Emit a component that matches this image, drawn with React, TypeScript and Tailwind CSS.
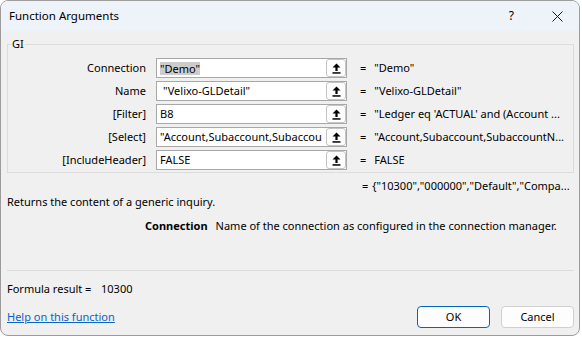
import React from "react";

const font = { fontFamily: '"Noto Sans", "Open Sans", Arial, sans-serif' };

function UpArrow() {
  return (
    <svg width="9" height="11" viewBox="0 0 9 11" fill="#000">
      <path d="M4.5 0.5 L8.5 4.5 H5.6 V8 H3.4 V4.5 H0.5 Z" />
      <rect x="0.5" y="9.2" width="8" height="1.5" />
    </svg>
  );
}

type Row = { label: string; input: React.ReactNode; value: string };

const rows: Row[] = [
  {
    label: "Connection",
    input: <span className="bg-[#cccccc] leading-[13px]">"Demo"</span>,
    value: '"Demo"',
  },
  { label: "Name", input: <span className="pl-[3px]">"Velixo-GLDetail"</span>, value: '"Velixo-GLDetail"' },
  { label: "[Filter]", input: <span>B8</span>, value: "\"Ledger eq 'ACTUAL' and (Account ..." },
  {
    label: "[Select]",
    input: <span>"Account,Subaccount,Subaccou</span>,
    value: '"Account,Subaccount,SubaccountN...',
  },
  { label: "[IncludeHeader]", input: <span>FALSE</span>, value: "FALSE" },
];

export default function App() {
  return (
    <div className="w-[582px] h-[338px] bg-white text-[11px] text-black" style={font}>
      <div className="w-[580px] h-[336px] rounded-[8px] border border-[#9c9c9c] bg-[#f0f0f0] overflow-hidden flex flex-col">
        {/* Title bar */}
        <div className="h-[30px] bg-[#eef2f9] flex items-center pl-[8px] shrink-0">
          <span className="text-[11.5px] leading-[16px]">Function Arguments</span>
          <span className="ml-auto text-[12px] leading-[16px] mr-[38px]">?</span>
          <svg width="11" height="11" viewBox="0 0 11 11" className="mr-[16px]" stroke="#1a1a1a" strokeWidth="1">
            <path d="M0.5 0.5 L10.5 10.5 M10.5 0.5 L0.5 10.5" />
          </svg>
        </div>

        {/* Group box */}
        <div className="relative ml-[6px] mt-[13px] w-[567px] border border-[#dcdcdc] pt-[13px] pb-[2px]">
          <span className="absolute left-[3px] -top-[9px] bg-[#f0f0f0] px-[1px] leading-[16px]">GI</span>
          <div className="flex flex-col gap-[3px]">
            {rows.map((r) => (
              <div key={r.label} className="flex items-center h-[20px] leading-[16px]">
                <div className="w-[138px] text-right whitespace-nowrap">{r.label}</div>
                <div className="ml-[10px] w-[191px] h-[20px] border border-[#a8a8a8] bg-white flex items-center">
                  <div className="flex-1 min-w-0 overflow-hidden whitespace-nowrap pl-[3px] flex items-center">{r.input}</div>
                  <div className="w-[20px] h-[18px] border border-[#c4c4c4] rounded-[3px] bg-[#fdfdfd] flex items-center justify-center shrink-0">
                    <UpArrow />
                  </div>
                </div>
                <div className="ml-[13px]">=</div>
                <div className="ml-[8px] whitespace-nowrap">{r.value}</div>
              </div>
            ))}
          </div>
        </div>

        {/* Below group */}
        <div className="pl-[6px] leading-[16px]">
          <div className="mt-[5px] pl-[355px] whitespace-nowrap flex">
            <span>=</span>
            <span className="ml-[4px]">{'{"10300","000000","Default","Compa...'}</span>
          </div>
          <div>Returns the content of a generic inquiry.</div>
          <div className="mt-[8px] pl-[138px] flex whitespace-nowrap">
            <span className="font-bold">Connection</span>
            <span className="ml-[8px]">Name of the connection as configured in the connection manager.</span>
          </div>
        </div>

        <div className="ml-[6px] w-[567px] mt-[36px] border-t border-[#dcdcdc]" />

        <div className="ml-[6px] mt-[10px] leading-[16px] flex">
          <span className="w-[94px]">Formula result =</span>
          <span>10300</span>
        </div>

        <div className="ml-[6px] w-[567px] mt-[9px] flex items-center">
          <a className="text-[#0a63c9] underline leading-[16px]" href="#">
            Help on this function
          </a>
          <button className="ml-auto w-[73px] h-[22px] rounded-[4px] border border-[#0067c0] bg-[#fdfdfd] leading-[16px]">
            OK
          </button>
          <button className="ml-[11px] w-[73px] h-[22px] rounded-[4px] border border-[#d0d0d0] bg-[#fdfdfd] leading-[16px]">
            Cancel
          </button>
        </div>
      </div>
    </div>
  );
}
